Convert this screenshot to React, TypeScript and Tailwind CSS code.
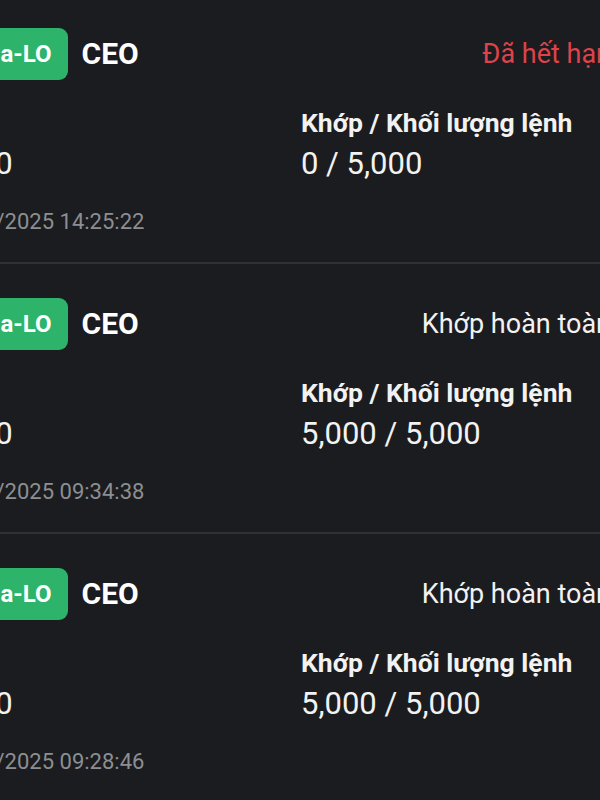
const orders = [
  { side: "Mua-LO", symbol: "CEO", status: "Đã hết hạn", expired: true, price: "9,000", matched: "0 / 5,000", time: "04/07/2025 14:25:22" },
  { side: "Mua-LO", symbol: "CEO", status: "Khớp hoàn toàn", expired: false, price: "9,000", matched: "5,000 / 5,000", time: "04/07/2025 09:34:38" },
  { side: "Mua-LO", symbol: "CEO", status: "Khớp hoàn toàn", expired: false, price: "9,000", matched: "5,000 / 5,000", time: "04/07/2025 09:28:46" },
];

export default function App() {
  return (
    <div className="w-[600px] h-[800px] overflow-hidden bg-[#1b1c1f] font-['Roboto',sans-serif]">
      <div className="-mt-[6px] -ml-[63px] w-[674px]">
        {orders.map((o, i) => (
          <div key={i}>
            <div className="pt-[34px] pb-[26px]">
              {/* side, symbol, status */}
              <div className="flex items-center justify-between h-[52px]">
                <div className="flex items-center gap-[14px]">
                  <span className="h-[52px] pl-[29px] pr-[16px] rounded-[9px] bg-[#2eb36a] text-white font-bold text-[24px] leading-[52px]">
                    {o.side}
                  </span>
                  <span className="text-white font-bold text-[30px] leading-none">{o.symbol}</span>
                </div>
                <span className={o.expired ? "text-[#dc434b] text-[27px]" : "text-[#f2f2f2] text-[27px]"}>{o.status}</span>
              </div>

              {/* price / matched volume */}
              <div className="grid grid-cols-[364px_1fr] mt-[27px]">
                <div>
                  <p className="text-[#f2f2f2] font-bold text-[26.5px] leading-[32px]">Giá</p>
                  <p className="mt-[7px] text-[#f2f2f2] text-[31px] leading-[36px]">{o.price}</p>
                </div>
                <div>
                  <p className="text-[#f2f2f2] font-bold text-[26.5px] leading-[32px]">Khớp / Khối lượng lệnh</p>
                  <p className="mt-[7px] text-[#f2f2f2] text-[31px] leading-[36px]">{o.matched}</p>
                </div>
              </div>

              <p className="mt-[26px] text-[#8d8e92] text-[22px] leading-[28px]">{o.time}</p>
            </div>
            <div className="h-[2px] bg-[#303134]" />
          </div>
        ))}
      </div>
    </div>
  );
}
